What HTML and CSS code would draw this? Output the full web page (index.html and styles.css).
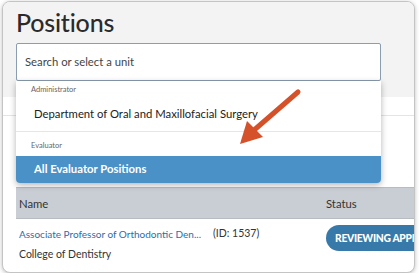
FILE: index.html
```html
<!DOCTYPE html>
<html lang="en">
<head>
    <meta charset="UTF-8">
    <title>Positions</title>
    <link rel="stylesheet" href="styles.css">
</head>
<body>
    <div class="window">
        <div class="top">
            <h1 class="title">Positions</h1>
            <div class="search">
                <div class="search-box">Search or select a unit</div>
                <ul class="menu">
                    <li class="group">Administrator</li>
                    <li class="option">Department of Oral and Maxillofacial Surgery</li>
                    <li class="group sep">Evaluator</li>
                    <li class="option active">All Evaluator Positions</li>
                </ul>
            </div>
        </div>
        <div class="tabs"></div>
        <table class="grid">
            <thead>
                <tr>
                    <td class="col-name">Name</td>
                    <td class="col-id"></td>
                    <td class="col-status">Status</td>
                </tr>
            </thead>
            <tbody>
                <tr>
                    <td class="col-name">
                        <a class="pos-link" href="#">Associate Professor of Orthodontic Den...</a>
                        <div class="unit">College of Dentistry</div>
                    </td>
                    <td class="col-id">(ID: 1537)</td>
                    <td class="col-status"><span class="badge">REVIEWING APPLICANTS</span></td>
                </tr>
            </tbody>
        </table>
        <svg class="arrow" width="80" height="70" viewBox="0 0 80 70">
            <line x1="69" y1="6" x2="24" y2="45" stroke="#d5512a" stroke-width="5" stroke-linecap="round"/>
            <polygon points="11,58 18,35 34,51" fill="#d5512a"/>
        </svg>
    </div>
</body>
</html>
```

FILE: styles.css
```css
body{
    margin: 0;
    background: #fff;
    font-family: Lato, "Open Sans", sans-serif;
    color: #333;
}
.window{
    position: relative;
    height: 270px;
    margin: 1px 4px 0 2px;
    border: 1px solid #c4c4c4;
    border-radius: 8px;
    box-shadow: 0 1px 4px rgba(0,0,0,0.25);
    overflow: hidden;
    background: #fff;
}
.top{
    background: #f3f3f3;
    height: 95px;
    padding: 0 33px 0 13px;
}
.title{
    margin: 0;
    padding-top: 5px;
    height: 36px;
    font-size: 25px;
    font-weight: 500;
    color: #2b2b2b;
    letter-spacing: -0.2px;
}
.search{
    position: relative;
}
.search-box{
    height: 36px;
    line-height: 36px;
    padding: 0 8px;
    border: 1px solid #8b9db1;
    border-radius: 2px;
    background: #fff;
    font-size: 11.3px;
    color: #444;
}
.menu{
    position: absolute;
    z-index: 2;
    top: 38px;
    left: 0;
    right: 0;
    margin: 0;
    padding: 0;
    list-style: none;
    background: #fff;
    border-radius: 0 0 4px 4px;
    box-shadow: 0 2px 6px rgba(0,0,0,0.3);
}
.group{
    padding: 4px 15px 0;
    height: 14px;
    font-size: 7.5px;
    color: #666;
}
.group.sep{
    border-top: 1px solid #e6e6e6;
    padding-top: 9px;
    height: 15px;
}
.option{
    padding: 0 18px;
    height: 32px;
    line-height: 30px;
    font-size: 11.3px;
    color: #222;
}
.option.active{
    height: 27px;
    line-height: 26px;
    background: #4a91c7;
    color: #fff;
    font-weight: 700;
    border-radius: 0 0 4px 4px;
}
.tabs{
    height: 18px;
    border-bottom: 1px solid #e4e4e4;
}
.grid{
    margin: 71px 0 0 13px;
    border-collapse: collapse;
    table-layout: fixed;
    width: 433px;
    font-size: 11px;
}
.grid thead td{
    height: 30px;
    background: #c9ced4;
    border-top: 1px solid #b7bcc2;
    border-bottom: 1px solid #b7bcc2;
    font-size: 11.3px;
    color: #333;
}
.grid td{
    padding: 0 3px;
    vertical-align: middle;
    white-space: nowrap;
}
.col-name{
    width: 188px;
}
.col-id{
    width: 107px;
}
.col-status{
    width: 120px;
}
.grid tbody td{
    vertical-align: top;
    padding-top: 9px;
}
.pos-link{
    display: block;
    font-size: 10px;
    color: #2d6da6;
    text-decoration: none;
}
.unit{
    margin-top: 8px;
    font-size: 10.5px;
    color: #333;
}
.grid tbody .col-id{
    font-size: 10.5px;
    color: #333;
    padding-top: 8px;
}
.grid tbody .col-status{
    padding-top: 6px;
}
.badge{
    display: inline-block;
    height: 26px;
    line-height: 26px;
    padding: 0 9px;
    border-radius: 13px;
    background: #3779a8;
    color: #fff;
    font-weight: 900;
    font-size: 10.3px;
    letter-spacing: -0.3px;
}
.arrow{
    position: absolute;
    z-index: 3;
    left: 226px;
    top: 84px;
}
```
